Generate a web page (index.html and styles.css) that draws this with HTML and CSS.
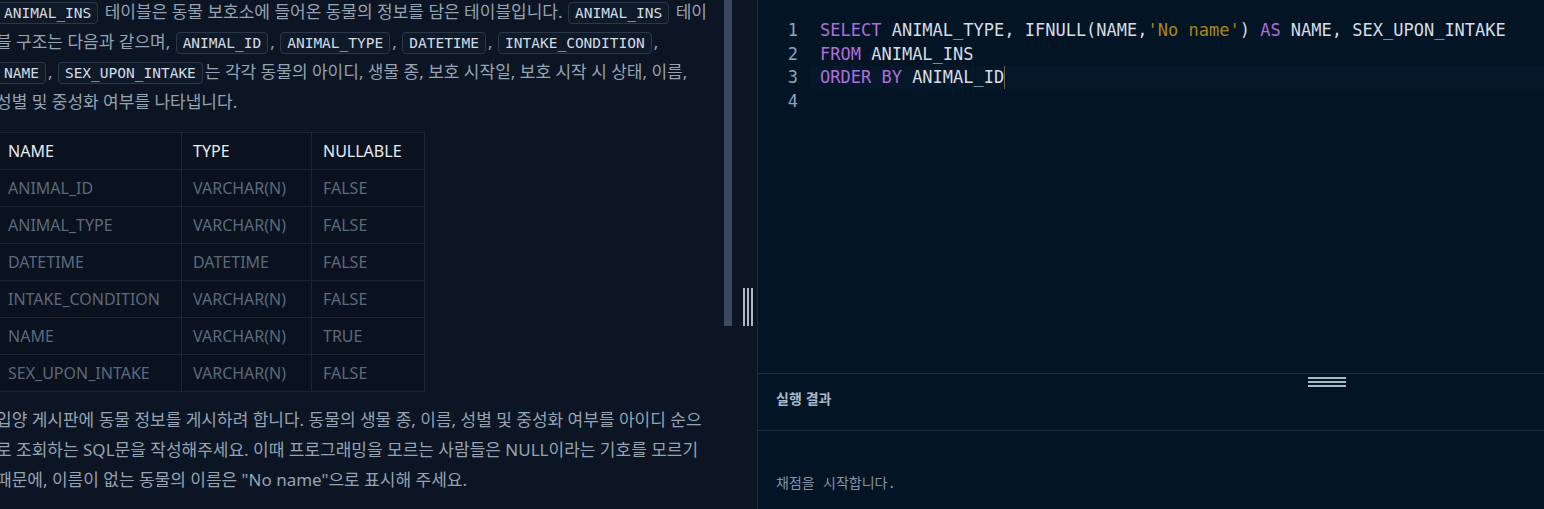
FILE: index.html
```html
<!DOCTYPE html>
<html lang="ko">
<head>
<meta charset="utf-8">
<link rel="stylesheet" href="styles.css">
</head>
<body>
<div class="page">
  <section class="left">
    <div class="desc">
      <div class="desc-inner">
        <p class="para"><code class="chip">ANIMAL_INS</code> 테이블은 동물 보호소에 들어온 동물의 정보를 담은 테이블입니다. <code class="chip">ANIMAL_INS</code> 테이블 구조는 다음과 같으며, <code class="chip">ANIMAL_ID</code>, <code class="chip">ANIMAL_TYPE</code>, <code class="chip">DATETIME</code>, <code class="chip">INTAKE_CONDITION</code>, <code class="chip">NAME</code>, <code class="chip">SEX_UPON_INTAKE</code>는 각각 동물의 아이디, 생물 종, 보호 시작일, 보호 시작 시 상태, 이름, 성별 및 중성화 여부를 나타냅니다.</p>
        <table class="schema">
          <thead>
            <tr><th class="c1">NAME</th><th class="c2">TYPE</th><th class="c3">NULLABLE</th></tr>
          </thead>
          <tbody>
            <tr><td>ANIMAL_ID</td><td>VARCHAR(N)</td><td>FALSE</td></tr>
            <tr><td>ANIMAL_TYPE</td><td>VARCHAR(N)</td><td>FALSE</td></tr>
            <tr><td>DATETIME</td><td>DATETIME</td><td>FALSE</td></tr>
            <tr><td>INTAKE_CONDITION</td><td>VARCHAR(N)</td><td>FALSE</td></tr>
            <tr><td>NAME</td><td>VARCHAR(N)</td><td>TRUE</td></tr>
            <tr><td>SEX_UPON_INTAKE</td><td>VARCHAR(N)</td><td>FALSE</td></tr>
          </tbody>
        </table>
        <p class="para para2">입양 게시판에 동물 정보를 게시하려 합니다. 동물의 생물 종, 이름, 성별 및 중성화 여부를 아이디 순으로 조회하는 SQL문을 작성해주세요. 이때 프로그래밍을 모르는 사람들은 NULL이라는 기호를 모르기 때문에, 이름이 없는 동물의 이름은 "No name"으로 표시해 주세요.</p>
      </div>
    </div>
    <div class="scrolltrack"><div class="thumb"></div></div>
    <div class="gutter">
      <div class="vhandle"><span></span><span></span><span></span></div>
    </div>
  </section>
  <section class="right">
    <div class="editor">
      <div class="line"><span class="ln">1</span><span class="code"><span class="kw">SELECT</span> ANIMAL_TYPE, IFNULL(NAME,<span class="str">'No name'</span>) <span class="kw">AS</span> NAME, SEX_UPON_INTAKE</span></div>
      <div class="line"><span class="ln">2</span><span class="code"><span class="kw">FROM</span> ANIMAL_INS</span></div>
      <div class="line active"><span class="ln">3</span><span class="code"><span class="kw">ORDER BY</span> ANIMAL_ID<span class="cursor"></span></span></div>
      <div class="line"><span class="ln">4</span><span class="code"></span></div>
    </div>
    <div class="result">
      <div class="hhandle"><span></span><span></span><span></span></div>
      <div class="result-head">실행 결과</div>
      <div class="result-body">채점을 시작합니다.</div>
    </div>
  </section>
</div>
</body>
</html>
```
FILE: styles.css
```css
html, body {
  margin: 0;
  padding: 0;
  height: 100%;
  overflow: hidden;
  background: #0b1523;
}

.page {
  display: flex;
  width: 1544px;
  height: 509px;
}

.left {
  flex: 0 0 757px;
  display: flex;
  background: #0b1523;
  border-right: 1px solid #1e2b3a;
  overflow: hidden;
}

.desc {
  flex: 0 0 724px;
  overflow: hidden;
}

.desc-inner {
  width: 711px;
  margin: -3px 0 0 -4px;
}

.para {
  margin: 0;
  font-family: "Noto Sans", "Noto Sans CJK KR", sans-serif;
  font-size: 17px;
  line-height: 30px;
  color: #95a3b3;
}

.chip {
  font-family: "DejaVu Sans Mono", monospace;
  font-size: 14.5px;
  line-height: 1;
  color: #d3dce6;
  background: #0f1a28;
  border: 1px solid #2a3749;
  border-radius: 4px;
  padding: 2px 6px;
  margin: 0 2px 0 1px;
}

.schema {
  margin: 15px 0 13px 0;
  border-collapse: collapse;
  background: #0a111f;
  font-family: "Noto Sans", "Noto Sans CJK KR", sans-serif;
  font-size: 16px;
}

.schema th,
.schema td {
  border: 1px solid #1b2535;
  height: 36px;
  padding: 0 12px 0 11px;
  text-align: left;
  font-weight: normal;
  white-space: nowrap;
}

.schema th {
  color: #e8edf3;
}

.schema td {
  color: #5b6b7c;
}

.schema .c1 { width: 161px; }
.schema .c2 { width: 106px; }
.schema .c3 { width: 89px; }

.scrolltrack {
  flex: 0 0 8px;
}

.thumb {
  height: 326px;
  background: #3b4a5e;
}

.gutter {
  flex: 1;
  padding: 288px 0 0 11px;
}

.vhandle {
  display: flex;
  gap: 2px;
  height: 38px;
}

.vhandle span {
  width: 2px;
  height: 100%;
  background: #a9b8c2;
}

.right {
  flex: 1;
  display: flex;
  flex-direction: column;
  background: #031424;
}

.editor {
  height: 373px;
  padding-top: 19px;
  box-sizing: border-box;
  font-family: "DejaVu Sans Mono", monospace;
  font-size: 17px;
  line-height: 23.6px;
  color: #d6dde5;
}

.line {
  display: flex;
  white-space: pre;
}

.line.active .code {
  background: #05182a;
}

.ln {
  flex: 0 0 40px;
  text-align: right;
  color: #8ba6c2;
}

.code {
  flex: 1;
  margin-left: 13px;
  padding-left: 9px;
}

.kw { color: #ad6fd6; }
.str { color: #a88714; }

.cursor {
  display: inline-block;
  width: 1px;
  height: 23px;
  vertical-align: top;
  background: #6b6455;
}

.result {
  flex: 1;
  position: relative;
  border-top: 1px solid #1f2c3b;
}

.hhandle {
  position: absolute;
  top: 3px;
  left: 550px;
  width: 38px;
  display: flex;
  flex-direction: column;
  gap: 2px;
}

.hhandle span {
  height: 2px;
  background: #a9b8c2;
}

.result-head {
  height: 57px;
  box-sizing: border-box;
  padding: 14px 0 0 18px;
  font-family: "Noto Sans CJK KR", sans-serif;
  font-weight: bold;
  font-size: 14px;
  color: #a9b9c6;
  border-bottom: 1px solid #1f2c3b;
}

.result-body {
  padding: 41px 0 0 18px;
  font-family: "DejaVu Sans Mono", "Noto Sans CJK KR", monospace;
  font-size: 14px;
  color: #8595a6;
}
```
